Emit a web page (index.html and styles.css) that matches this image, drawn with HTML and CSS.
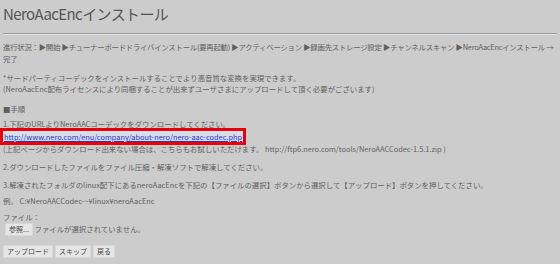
FILE: index.html
```html
<!DOCTYPE html>
<html>
<head>
    <title>NeroAacEncインストール</title>
    <link rel="stylesheet" href="styles.css">
</head>
<body>
    <div class="page">
        <h1 class="title">NeroAacEncインストール</h1>
        <hr class="rule">

        <!-- progress -->
        <p class="progress">進行状況：▶開始 ▶チューナーボードドライバインストール(要再起動) ▶アクティベーション ▶録画先ストレージ設定 ▶チャンネルスキャン ▶NeroAacEncインストール → 完了</p>

        <p class="note">*サードパーティコーデックをインストールすることでより高音質な変換を実現できます。<br>(NeroAacEnc配布ライセンスにより同梱することが出来ずユーザさまにアップロードして頂く必要がございます)</p>

        <p class="head">■手順</p>

        <div class="step">
            <div>1.下記のURLよりNeroAACコーデックをダウンロードしてください。</div>
            <div class="link-row"><a class="link-box" href="#">http://www.nero.com/enu/company/about-nero/nero-aac-codec.php</a></div>
            <div>(上記ページからダウンロード出来ない場合は、こちらもお試しいただけます。 http://ftp6.nero.com/tools/NeroAACCodec-1.5.1.zip )</div>
        </div>

        <p class="step2">2.ダウンロードしたファイルをファイル圧縮・解凍ソフトで解凍してください。</p>
        <p class="step3">3.解凍されたフォルダのlinux配下にあるneroAacEncを下記の【ファイルの選択】ボタンから選択して【アップロード】ボタンを押してください。</p>
        <p class="example">例。 C:¥NeroAACCodec-~¥linux¥neroAacEnc</p>

        <div class="file-field">
            <div>ファイル：</div>
            <div class="file-row"><button class="btn">参照...</button> ファイルが選択されていません。</div>
        </div>

        <div class="actions">
            <button class="btn">アップロード</button>
            <button class="btn">スキップ</button>
            <button class="btn">戻る</button>
        </div>
    </div>
</body>
</html>
```

FILE: styles.css
```css
body {
    margin: 0;
    background: #cccccc;
    color: #606060;
    font-family: "Noto Sans CJK JP", "Noto Sans", sans-serif;
    font-size: 7.4px;
    line-height: 12px;
}

.page { padding: 0 3px; }
.title { font-size: 15px; font-weight: normal; line-height: 20px; margin: 0; padding-top: 4px; color: #555555; letter-spacing: -0.6px; }
.rule { margin: 9px 0 0 0; border: 0; border-top: 1px solid #9c9c9c; border-bottom: 1px solid #e4e4e4; height: 0; }

p { margin: 0; }
.progress { margin-top: 6px; letter-spacing: -0.25px; }
.note { margin-top: 7px; line-height: 11px; }
.head { margin-top: 9px; }
.step { margin-top: 3px; }
.step > div { line-height: 11px; }
.step > div:first-child { line-height: 12px; }
.link-row { padding: 1px 0; }
.link-box { color: #2233cc; text-decoration: underline; background: #d8dee9; outline: 3px solid #e8000a; outline-offset: 0; padding: 0 1px; }
.step2 { margin-top: 7px; }
.step3 { margin-top: 6px; }
.example { margin-top: 4px; }
.file-field { margin-top: 4px; }
.file-row { margin-top: 0; line-height: 12px; }
.actions { margin-top: 9px; display: flex; gap: 2px; }

.btn { font-family: inherit; font-size: 7px; line-height: 9px; padding: 1px 3px; margin: 0; color: #444444; background: #e6e6e6; border: 1px solid #d8d8d8; border-radius: 1px; }
.file-row .btn { margin-left: 2px; }
```
